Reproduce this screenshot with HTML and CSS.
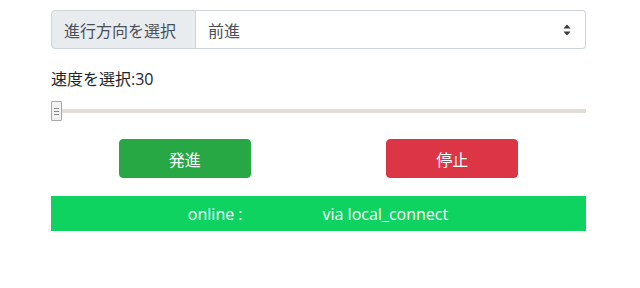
FILE: index.html
```html
<!DOCTYPE html>
<html lang="ja">
<head>
<meta charset="utf-8">
<link rel="stylesheet" href="styles.css">
</head>
<body>
<div class="container">
  <div class="input-group">
    <span class="group-label">進行方向を選択</span>
    <div class="select">
      <span>前進</span>
      <svg class="arrows" width="8" height="12" viewBox="0 0 8 12"><path d="M4 0.5L7.5 4.5H0.5Z M4 11.5L7.5 7.5H0.5Z" fill="#343a40"/></svg>
    </div>
  </div>
  <div class="speed-label">速度を選択:30</div>
  <div class="slider-row">
    <input class="slider" type="range" min="0" max="100" value="0">
  </div>
  <div class="buttons">
    <div class="cell"><button class="btn btn-go">発進</button></div>
    <div class="cell"><button class="btn btn-stop">停止</button></div>
  </div>
  <div class="status">online :<span class="blank"></span>via local_connect</div>
</div>
</body>
</html>
```
FILE: styles.css
```css
* { box-sizing: border-box; }
html, body { margin: 0; padding: 0; background: #fff; }
body {
  font-family: "Open Sans", "Noto Sans CJK JP", sans-serif;
  font-size: 16px;
  color: #212529;
}
.container {
  width: 535px;
  margin-left: 51px;
  padding-top: 10px;
}
.input-group {
  display: flex;
  height: 39px;
}
.group-label {
  display: flex;
  align-items: center;
  padding: 0 12px;
  width: 145px;
  background: #e9ecef;
  border: 1px solid #ced4da;
  border-radius: 4px 0 0 4px;
  color: #495057;
  white-space: nowrap;
}
.select {
  flex: 1;
  display: flex;
  align-items: center;
  justify-content: space-between;
  padding: 0 14px 0 12px;
  border: 1px solid #ced4da;
  border-left: none;
  border-radius: 0 4px 4px 0;
  color: #495057;
}
.speed-label {
  margin-top: 18px;
  line-height: 24px;
}
.slider-row {
  margin-top: 9px;
  height: 22px;
  display: flex;
  align-items: center;
}
.slider {
  -webkit-appearance: none;
  appearance: none;
  width: 100%;
  margin: 0;
  height: 20px;
  background: transparent;
}
.slider::-webkit-slider-runnable-track {
  height: 4px;
  background: #e2ddd8;
}
.slider::-webkit-slider-thumb {
  -webkit-appearance: none;
  width: 11px;
  height: 20px;
  margin-top: -8px;
  border: 1px solid #a8a8a8;
  border-radius: 1px;
  background:
    linear-gradient(#888, #888) center 6px / 5px 1px no-repeat,
    linear-gradient(#888, #888) center 9px / 5px 1px no-repeat,
    linear-gradient(#888, #888) center 12px / 5px 1px no-repeat,
    #f3f3f3;
}
.buttons {
  display: flex;
  margin-top: 17px;
}
.cell {
  flex: 1;
  display: flex;
  justify-content: center;
}
.btn {
  width: 132px;
  height: 39px;
  border: 1px solid transparent;
  border-radius: 4px;
  color: #fff;
  font-family: inherit;
  font-size: 16px;
  padding: 0;
}
.btn-go { background: #28a745; border-color: #28a745; }
.btn-stop { background: #dc3545; border-color: #dc3545; }
.status {
  margin-top: 18px;
  height: 35px;
  background: #0fd360;
  color: #fff;
  display: flex;
  align-items: center;
  justify-content: center;
  padding-right: 1px;
}
.blank { display: inline-block; width: 80px; }
```
